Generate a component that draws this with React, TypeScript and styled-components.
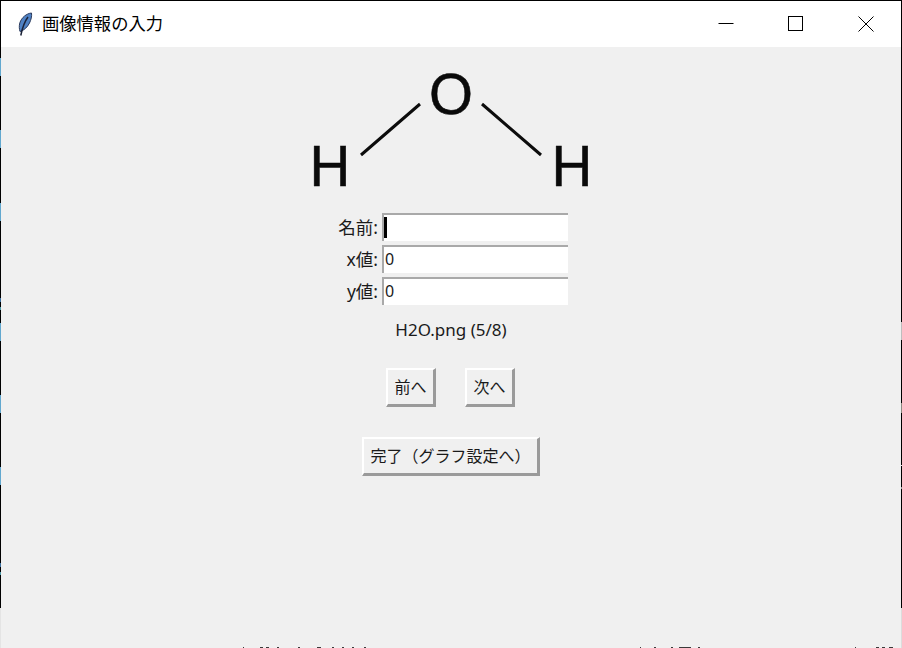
import React from "react";
import styled, { createGlobalStyle } from "styled-components";

const GlobalStyle = createGlobalStyle`
  html, body {
    margin: 0;
    padding: 0;
    background: #f0f0f0;
  }
`;

const Window = styled.div`
  position: relative;
  width: 902px;
  height: 648px;
  box-sizing: border-box;
  display: flex;
  flex-direction: column;
  border-top: 1px solid #000;
  border-left: 1px solid #000;
  border-right: 1px solid #000;
  background: #f0f0f0;
  font-family: "Noto Sans", "Noto Sans CJK JP", sans-serif;
  color: #1a1a1a;
`;

// bits of whatever was behind the window, showing along its edges
const EdgeMark = styled.span<{ $side: "left" | "right"; $top: number; $height: number; $color: string }>`
  position: absolute;
  ${(p) => p.$side}: -1px;
  top: ${(p) => p.$top - 1}px;
  width: 1px;
  height: ${(p) => p.$height}px;
  background: ${(p) => p.$color};
`;

const BottomMark = styled.span<{ $left: number; $width: number }>`
  position: absolute;
  bottom: 0;
  left: ${(p) => p.$left - 1}px;
  width: ${(p) => p.$width}px;
  height: 1px;
  background: #3a3a3a;
`;

const TitleBar = styled.div`
  height: 46px;
  flex: none;
  display: flex;
  align-items: center;
  background: #fff;
`;

const AppIcon = styled.svg`
  width: 16px;
  height: 25px;
  margin-left: 16px;
  flex: none;
`;

const WindowTitle = styled.div`
  margin-left: 9px;
  padding-bottom: 3px;
  flex: 1;
  font-size: 17.3px;
  color: #000;
`;

const WindowControl = styled.button`
  width: 70px;
  height: 46px;
  padding: 0;
  border: none;
  background: none;
  display: flex;
  align-items: center;
  justify-content: center;
`;

const Content = styled.main`
  flex: 1;
  display: flex;
  flex-direction: column;
  align-items: center;
`;

const Molecule = styled.svg`
  width: 300px;
  height: 160px;
  margin-top: 6px;
  flex: none;
  font-family: "Liberation Sans", Arial, sans-serif;
`;

const Form = styled.div`
  display: grid;
  grid-template-columns: 50px 186px;
  grid-auto-rows: 28px;
  row-gap: 4px;
  column-gap: 4px;
  margin-left: -6px;
`;

const FieldLabel = styled.label`
  font-size: 17.5px;
  line-height: 28px;
  text-align: right;
  white-space: nowrap;
`;

const EntryBox = styled.div`
  position: relative;
`;

const Entry = styled.input`
  width: 100%;
  height: 100%;
  box-sizing: border-box;
  padding: 0 0 2px 1px;
  margin: 0;
  outline: none;
  background: #fff;
  border-style: solid;
  border-width: 2px 0 0 2px;
  border-color: #a9a9a9;
  font-family: inherit;
  font-size: 16px;
  color: #1a1a1a;
`;

const Caret = styled.span`
  position: absolute;
  left: 2px;
  top: 4px;
  width: 3px;
  height: 21px;
  background: #000;
`;

const FileStatus = styled.div`
  margin-top: 13px;
  font-size: 17px;
  line-height: 24px;
`;

const ButtonRow = styled.div`
  display: flex;
  gap: 29px;
  margin-top: 26px;
  margin-left: -1px;
`;

const TkButton = styled.button<{ $wide?: boolean }>`
  width: ${(p) => (p.$wide ? "178px" : "50px")};
  height: 39px;
  box-sizing: border-box;
  padding: 0 0 2px;
  margin: 0;
  background: #f0f0f0;
  border-style: solid;
  border-width: 2px 3px 3px 2px;
  border-color: #fff #9a9a9a #9a9a9a #fff;
  font-family: inherit;
  font-size: 16px;
  color: #1a1a1a;
  white-space: nowrap;
`;

const FinishRow = styled.div`
  margin-top: 30px;
`;

const fields = [
  { label: "名前:", value: "", focused: true },
  { label: "x値:", value: "0", focused: false },
  { label: "y値:", value: "0", focused: false },
];

const edgeMarks: Array<{ side: "left" | "right"; top: number; height: number; color: string }> = [
  { side: "left", top: 58, height: 18, color: "#62a8cf" },
  { side: "left", top: 130, height: 18, color: "#62a8cf" },
  { side: "left", top: 203, height: 18, color: "#62a8cf" },
  { side: "left", top: 298, height: 4, color: "#3d6f9e" },
  { side: "left", top: 307, height: 3, color: "#4f9aa8" },
  { side: "left", top: 323, height: 18, color: "#62a8cf" },
  { side: "left", top: 395, height: 18, color: "#62a8cf" },
  { side: "left", top: 467, height: 18, color: "#62a8cf" },
  { side: "left", top: 563, height: 4, color: "#3d6f9e" },
  { side: "left", top: 572, height: 3, color: "#4f9aa8" },
  { side: "left", top: 608, height: 40, color: "#e4e4e4" },
  { side: "right", top: 322, height: 18, color: "#bdbdbd" },
  { side: "right", top: 403, height: 10, color: "#8c8a80" },
  { side: "right", top: 465, height: 1, color: "#e0e0e0" },
  { side: "right", top: 487, height: 2, color: "#9a9a9a" },
  { side: "right", top: 608, height: 40, color: "#dcdcdc" },
];

const bottomMarks = [
  [243, 1], [260, 3], [266, 3], [277, 2], [298, 2], [317, 4], [332, 2], [342, 2], [352, 2], [364, 2],
  [640, 1], [654, 2], [671, 2], [679, 12], [698, 2], [855, 1], [876, 3], [882, 3], [889, 4],
];

const App = () => {
  return (
    <>
      <GlobalStyle />
      <Window>
        <TitleBar>
          <AppIcon viewBox="0 0 16 25">
            <path d="M14.500 1C9.500 1.500 4.500 5.500 2.800 11C2 14 2.200 17 3 19.500C7 18.500 10.500 15 12.500 11C14 8 15 4 14.500 1Z" fill="#4f82c4" stroke="#2b3a5c" strokeWidth="1" />
            <path d="M11 5C8 9 5.500 15 3.800 23.500" fill="none" stroke="#1a2238" strokeWidth="1.500" />
          </AppIcon>
          <WindowTitle>画像情報の入力</WindowTitle>
          <WindowControl aria-label="最小化">
            <svg width="16" height="16" viewBox="0 0 16 16">
              <path d="M0.500 7.500H15.500" stroke="#000" fill="none" />
            </svg>
          </WindowControl>
          <WindowControl aria-label="最大化">
            <svg width="16" height="16" viewBox="0 0 16 16">
              <rect x="0.500" y="0.500" width="14" height="14" stroke="#000" fill="none" />
            </svg>
          </WindowControl>
          <WindowControl aria-label="閉じる">
            <svg width="16" height="16" viewBox="0 0 16 16">
              <path d="M0.500 0.500L15.500 15.500M15.500 0.500L0.500 15.500" stroke="#000" fill="none" />
            </svg>
          </WindowControl>
        </TitleBar>
        <Content>
          <Molecule viewBox="301 53 300 160">
            <g fontSize="56.500" fill="#0a0a0a" stroke="#0a0a0a" strokeWidth="0.500">
              <text x="451" y="114" textAnchor="middle">O</text>
              <text x="330" y="186" textAnchor="middle">H</text>
              <text x="572" y="186" textAnchor="middle">H</text>
            </g>
            <path d="M361 155L420 104M482 104L541 155" stroke="#0c0c0c" strokeWidth="3" fill="none" />
          </Molecule>
          <Form>
            {fields.map((field) => (
              <React.Fragment key={field.label}>
                <FieldLabel>{field.label}</FieldLabel>
                <EntryBox>
                  <Entry readOnly value={field.value} />
                  {field.focused && <Caret />}
                </EntryBox>
              </React.Fragment>
            ))}
          </Form>
          <FileStatus>H2O.png (5/8)</FileStatus>
          <ButtonRow>
            <TkButton>前へ</TkButton>
            <TkButton>次へ</TkButton>
          </ButtonRow>
          <FinishRow>
            <TkButton $wide>完了（グラフ設定へ）</TkButton>
          </FinishRow>
        </Content>
        {edgeMarks.map((mark) => (
          <EdgeMark key={`${mark.side}-${mark.top}`} $side={mark.side} $top={mark.top} $height={mark.height} $color={mark.color} />
        ))}
        {bottomMarks.map(([left, width]) => (
          <BottomMark key={left} $left={left} $width={width} />
        ))}
      </Window>
    </>
  );
};

export default App;
